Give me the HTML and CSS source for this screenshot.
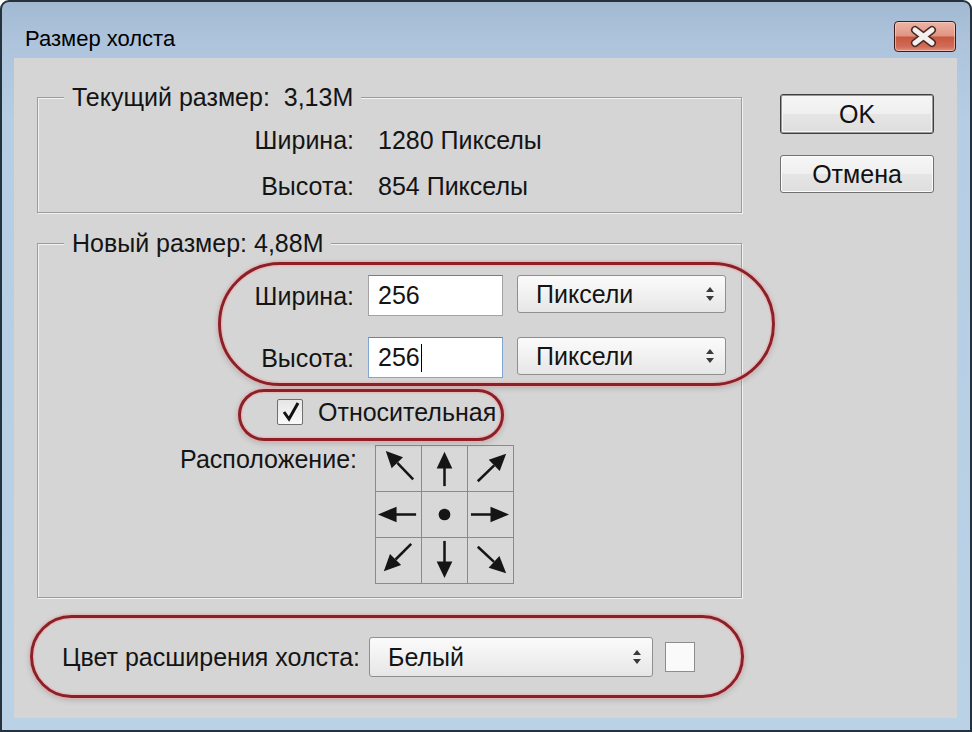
FILE: index.html
```html
<!DOCTYPE html>
<html lang="ru">
<head>
<meta charset="utf-8">
<title>Размер холста</title>
<link rel="stylesheet" href="styles.css">
</head>
<body>
<div class="window">
  <div class="titlebar">
    <div class="title">Размер холста</div>
    <div class="close">
      <svg width="62" height="31" viewBox="0 0 62 31">
        <path d="M21 9 L38 22 M38 9 L21 22" stroke="#4a2a28" stroke-width="8" stroke-linecap="round"/>
        <path d="M21 9 L38 22 M38 9 L21 22" stroke="#f4f0ee" stroke-width="5" stroke-linecap="round"/>
      </svg>
    </div>
  </div>
  <div class="client">
    <div class="main">
      <div class="group group-current">
        <div class="group-title">Текущий размер:&nbsp; 3,13M</div>
        <div class="info-grid">
          <span class="lbl">Ширина:</span><span>1280 Пикселы</span>
          <span class="lbl">Высота:</span><span>854 Пикселы</span>
        </div>
      </div>
      <div class="group group-new">
        <div class="group-title">Новый размер: 4,88M</div>
        <div class="size-grid">
          <span class="lbl">Ширина:</span>
          <div class="input">256</div>
          <div class="select"><span>Пиксели</span>
            <svg class="updown" width="10" height="16" viewBox="0 0 10 16"><polygon points="1,6 5,1 9,6"/><polygon points="1,10 5,15 9,10"/></svg>
          </div>
          <span class="lbl">Высота:</span>
          <div class="input input-focus">256<span class="caret"></span></div>
          <div class="select"><span>Пиксели</span>
            <svg class="updown" width="10" height="16" viewBox="0 0 10 16"><polygon points="1,6 5,1 9,6"/><polygon points="1,10 5,15 9,10"/></svg>
          </div>
        </div>
        <div class="check-row">
          <span class="checkbox">
            <svg width="24" height="24" viewBox="0 0 24 24"><path d="M6 12 L11 19 L20 3" fill="none" stroke="#111" stroke-width="3" stroke-linejoin="miter"/></svg>
          </span>
          <span>Относительная</span>
        </div>
        <div class="anchor-row">
          <span class="lbl">Расположение:</span>
          <div class="anchor">
            <div class="cell"><svg viewBox="0 0 46 46"><line x1="38" y1="34" x2="21.8" y2="17.2"/><polygon points="10,5 27.6,11.6 16,22.8"/></svg></div>
            <div class="cell"><svg viewBox="0 0 46 46"><line x1="23" y1="41" x2="23" y2="22"/><polygon points="23,6 31,23 15,23"/></svg></div>
            <div class="cell"><svg viewBox="0 0 46 46"><line x1="10" y1="36" x2="26.8" y2="19.8"/><polygon points="39,8 32.4,25.6 21.2,14"/></svg></div>
            <div class="cell"><svg viewBox="0 0 46 46"><line x1="41" y1="23" x2="20" y2="23"/><polygon points="2,23 21,15 21,31"/></svg></div>
            <div class="cell"><svg viewBox="0 0 46 46"><circle cx="23" cy="23" r="6"/></svg></div>
            <div class="cell"><svg viewBox="0 0 46 46"><line x1="3" y1="23" x2="24" y2="23"/><polygon points="42,23 23,15 23,31"/></svg></div>
            <div class="cell"><svg viewBox="0 0 46 46"><line x1="36" y1="6" x2="20" y2="22"/><polygon points="8,34 14.3,16.3 25.7,27.7"/></svg></div>
            <div class="cell"><svg viewBox="0 0 46 46"><line x1="23" y1="3" x2="23" y2="25"/><polygon points="23,41 15,24 31,24"/></svg></div>
            <div class="cell"><svg viewBox="0 0 46 46"><line x1="10" y1="9" x2="26.6" y2="24.4"/><polygon points="39,36 21.1,30.3 32.1,18.5"/></svg></div>
          </div>
        </div>
      </div>
      <div class="ext-row">
        <span class="ext-label">Цвет расширения холста:</span>
        <div class="select select-wide"><span>Белый</span>
          <svg class="updown" width="10" height="16" viewBox="0 0 10 16"><polygon points="1,6 5,1 9,6"/><polygon points="1,10 5,15 9,10"/></svg>
        </div>
        <span class="swatch"></span>
      </div>
    </div>
    <div class="buttons">
      <div class="btn btn-default">OK</div>
      <div class="btn">Отмена</div>
    </div>
  </div>
  <div class="mark mark-size"></div>
  <div class="mark mark-rel"></div>
  <div class="mark mark-ext"></div>
</div>
</body>
</html>
```

FILE: styles.css
```css
body {
  margin: 0;
  background: #ffffff;
  font-family: "Liberation Sans", Arial, sans-serif;
  color: #141414;
}

.window {
  position: relative;
  box-sizing: border-box;
  width: 972px;
  height: 732px;
  border: 2px solid #25313d;
  border-radius: 9px 9px 0 0;
  background: linear-gradient(180deg, #a2b9d2 0px, #adc4dc 40px, #b6cee3 120px, #b9d2e6 100%);
  padding: 0 13px 12px 12px;
  display: flex;
  flex-direction: column;
}

.titlebar {
  height: 56px;
  display: flex;
  justify-content: space-between;
  align-items: flex-start;
  flex: none;
}

.title {
  margin: 24px 0 0 11px;
  font-size: 22px;
  line-height: 26px;
  color: #000;
}

.close {
  margin: 19px 1px 0 0;
  width: 62px;
  height: 31px;
  box-sizing: border-box;
  border: 1px solid #3e1b1a;
  border-radius: 4px;
  background: linear-gradient(180deg, #edb4a6 0%, #df9483 48%, #c9563f 52%, #d06c57 85%, #e09080 100%);
  box-shadow: inset 0 0 0 1px rgba(255, 220, 210, 0.55);
  overflow: hidden;
}

.close svg {
  display: block;
  margin: -1px;
}

.client {
  flex: 1;
  display: flex;
  background: #d5d5d5;
  font-size: 25px;
  line-height: 28px;
}

.main {
  width: 705px;
  margin-left: 23px;
  padding-top: 39px;
}

.group {
  border: 1px solid #9c9c9c;
  box-shadow: inset 1px 1px 0 #f2f2f2, 1px 1px 0 #f2f2f2;
}

.group-title {
  width: fit-content;
  margin: -15px 0 0 26px;
  padding: 0 8px;
  background: #d5d5d5;
  height: 28px;
  white-space: nowrap;
}

.group-current {
  padding-bottom: 12px;
}

.info-grid {
  margin-top: 15px;
  display: grid;
  grid-template-columns: 316px auto;
  column-gap: 24px;
  row-gap: 18px;
}

.lbl {
  text-align: right;
  white-space: nowrap;
}

.group-new {
  margin-top: 30px;
  padding-bottom: 13px;
}

.size-grid {
  margin-top: 18px;
  display: grid;
  grid-template-columns: 316px 135px 209px;
  grid-auto-rows: 41px;
  column-gap: 14px;
  row-gap: 21px;
  align-items: center;
}

.size-grid .lbl {
  align-self: center;
}

.size-grid .select {
  align-self: start;
}

.input {
  box-sizing: border-box;
  height: 41px;
  border: 1px solid #a3a3a3;
  border-top-color: #7c7c7c;
  background: #fff;
  padding-left: 9px;
  line-height: 39px;
  display: flex;
  align-items: center;
}

.input-focus {
  border-color: #7fa5d2;
  border-top-color: #5d86bb;
}

.caret {
  display: inline-block;
  width: 1.5px;
  height: 28px;
  background: #000;
  margin-left: 1px;
}

.select {
  position: relative;
  box-sizing: border-box;
  height: 38px;
  border: 1px solid #8f8f8f;
  border-radius: 3px;
  background: linear-gradient(180deg, #fbfbfb 0%, #f1f1f1 50%, #e6e6e6 100%);
  padding-left: 18px;
  display: flex;
  align-items: center;
  justify-content: space-between;
  padding-right: 10px;
}

.updown {
  fill: #3a3a3a;
  flex: none;
}

.check-row {
  margin-top: 20px;
  padding-left: 239px;
  display: flex;
  align-items: center;
  gap: 15px;
  height: 28px;
}

.checkbox {
  box-sizing: border-box;
  width: 26px;
  height: 26px;
  border: 1px solid #6f6f6f;
  border-radius: 2px;
  background: linear-gradient(180deg, #e6e6e6, #fafafa);
  display: flex;
  align-items: center;
  justify-content: center;
}

.checkbox svg {
  display: block;
}

.anchor-row {
  margin-top: 19px;
  display: flex;
  align-items: flex-start;
  gap: 18px;
}

.anchor-row .lbl {
  width: 319px;
  flex: none;
}

.anchor {
  display: grid;
  grid-template-columns: repeat(3, 45px);
  grid-auto-rows: 45px;
  gap: 1px;
  border: 1px solid #8a8a8a;
  background: #8a8a8a;
}

.cell {
  background: #d8d8d8;
}

.cell svg {
  display: block;
  width: 45px;
  height: 45px;
  fill: #151515;
  stroke: #151515;
  stroke-width: 2.6;
}

.cell svg polygon,
.cell svg circle {
  stroke: none;
}

.ext-row {
  margin-top: 39px;
  padding-left: 25px;
  display: flex;
  align-items: center;
  height: 40px;
}

.ext-label {
  width: 293px;
  white-space: nowrap;
}

.select-wide {
  margin-left: 14px;
  width: 284px;
  height: 40px;
}

.swatch {
  margin-left: 12px;
  box-sizing: border-box;
  width: 30px;
  height: 30px;
  border: 1px solid #8d8d8d;
  background: #fafafa;
}

.buttons {
  margin-left: 38px;
  padding-top: 36px;
  display: flex;
  flex-direction: column;
  gap: 21px;
}

.btn {
  box-sizing: border-box;
  width: 154px;
  height: 38px;
  border: 1px solid #707070;
  border-radius: 3px;
  background: linear-gradient(180deg, #f6f6f6 0%, #efefef 50%, #e5e5e5 51%, #dedede 100%);
  box-shadow: inset 0 0 0 1px #fcfcfc;
  display: flex;
  align-items: center;
  justify-content: center;
  color: #111;
}

.btn-default {
  height: 40px;
  border-color: #3f3f3f;
  box-shadow: inset 0 0 0 1px #9a9a9a, inset 0 0 0 2px #f6f6f6;
}

.mark {
  position: absolute;
  box-sizing: border-box;
  border: 3.5px solid #8c2029;
  box-shadow: 0 0 0 1.5px rgba(240, 170, 170, 0.55), inset 0 0 0 1.5px rgba(240, 170, 170, 0.55), 0 2px 6px rgba(0, 0, 0, 0.18);
  pointer-events: none;
}

.mark-size {
  left: 216px;
  top: 260px;
  width: 557px;
  height: 124px;
  border-radius: 62px;
}

.mark-rel {
  left: 236px;
  top: 387px;
  width: 266px;
  height: 52px;
  border-radius: 26px;
}

.mark-ext {
  left: 28px;
  top: 613px;
  width: 714px;
  height: 83px;
  border-radius: 42px;
}
```
